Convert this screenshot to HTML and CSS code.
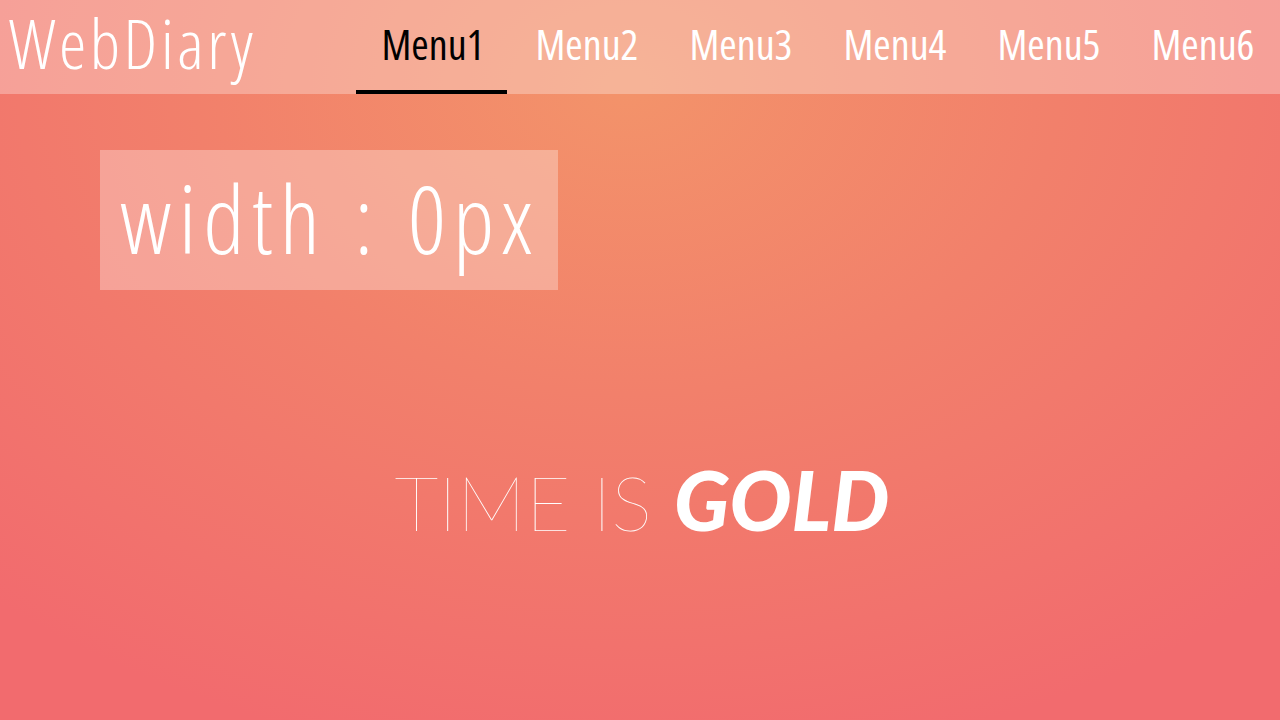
FILE: index.html
```html
<!DOCTYPE html>
<html lang="en">
<head>
<meta charset="utf-8">
<title>WebDiary</title>
<link rel="stylesheet" href="styles.css">
</head>
<body>
<header class="topbar">
  <div class="logo">WebDiary</div>
  <nav class="nav">
    <a class="nav-item active" href="#">Menu1</a>
    <a class="nav-item" href="#">Menu2</a>
    <a class="nav-item" href="#">Menu3</a>
    <a class="nav-item" href="#">Menu4</a>
    <a class="nav-item" href="#">Menu5</a>
    <a class="nav-item" href="#">Menu6</a>
  </nav>
</header>
<main class="content">
  <div class="width-box">width : 0px</div>
  <h1 class="slogan"><span class="thin">TIME IS</span> <span class="bold">GOLD</span></h1>
</main>
</body>
</html>
```
FILE: styles.css
```css
* { box-sizing: border-box; }
html, body { height: 100%; }
body {
  margin: 0;
  width: 1280px;
  height: 720px;
  overflow: hidden;
  background: radial-gradient(ellipse 75% 95% at 49% 12%, #f3936a 0%, #f2806b 45%, #f26b6e 100%);
  font-family: "Open Sans", sans-serif;
  font-stretch: 75%;
  color: #fff;
}
.topbar {
  height: 94px;
  display: flex;
  align-items: flex-start;
  background: rgba(255, 255, 255, 0.3);
}
.logo {
  padding-left: 9px;
  margin-top: -6px;
  font-size: 69px;
  font-weight: 300;
  line-height: 96px;
  letter-spacing: 3.5px;
  white-space: nowrap;
}
.nav {
  margin-left: auto;
  width: 924px;
  height: 94px;
  display: flex;
}
.nav-item {
  position: relative;
  flex: 1;
  display: flex;
  align-items: center;
  justify-content: center;
  text-decoration: none;
  color: #fff;
  font-size: 42px;
  font-weight: 400;
  padding-bottom: 8px;
}
.nav-item.active {
  color: #000;
}
.nav-item.active::after {
  content: "";
  position: absolute;
  left: 0;
  bottom: 0;
  width: 151px;
  height: 4px;
  background: #000;
}
.content {
  padding: 56px 0 0 100px;
}
.width-box {
  width: 458px;
  height: 140px;
  background: rgba(255, 255, 255, 0.3);
  font-size: 94px;
  font-weight: 300;
  line-height: 136px;
  letter-spacing: 7px;
  word-spacing: 3px;
  padding-left: 20px;
  white-space: nowrap;
  overflow: hidden;
}
.slogan {
  margin: 164px 0 0 -100px;
  text-align: center;
  font-family: Lato, sans-serif;
  font-stretch: normal;
  font-size: 77px;
  font-weight: 100;
  line-height: 90px;
  padding-left: 4px;
}
.slogan .thin { font-weight: 100; }
.slogan .bold { font-weight: 900; font-style: italic; font-size: 82px; }
```
